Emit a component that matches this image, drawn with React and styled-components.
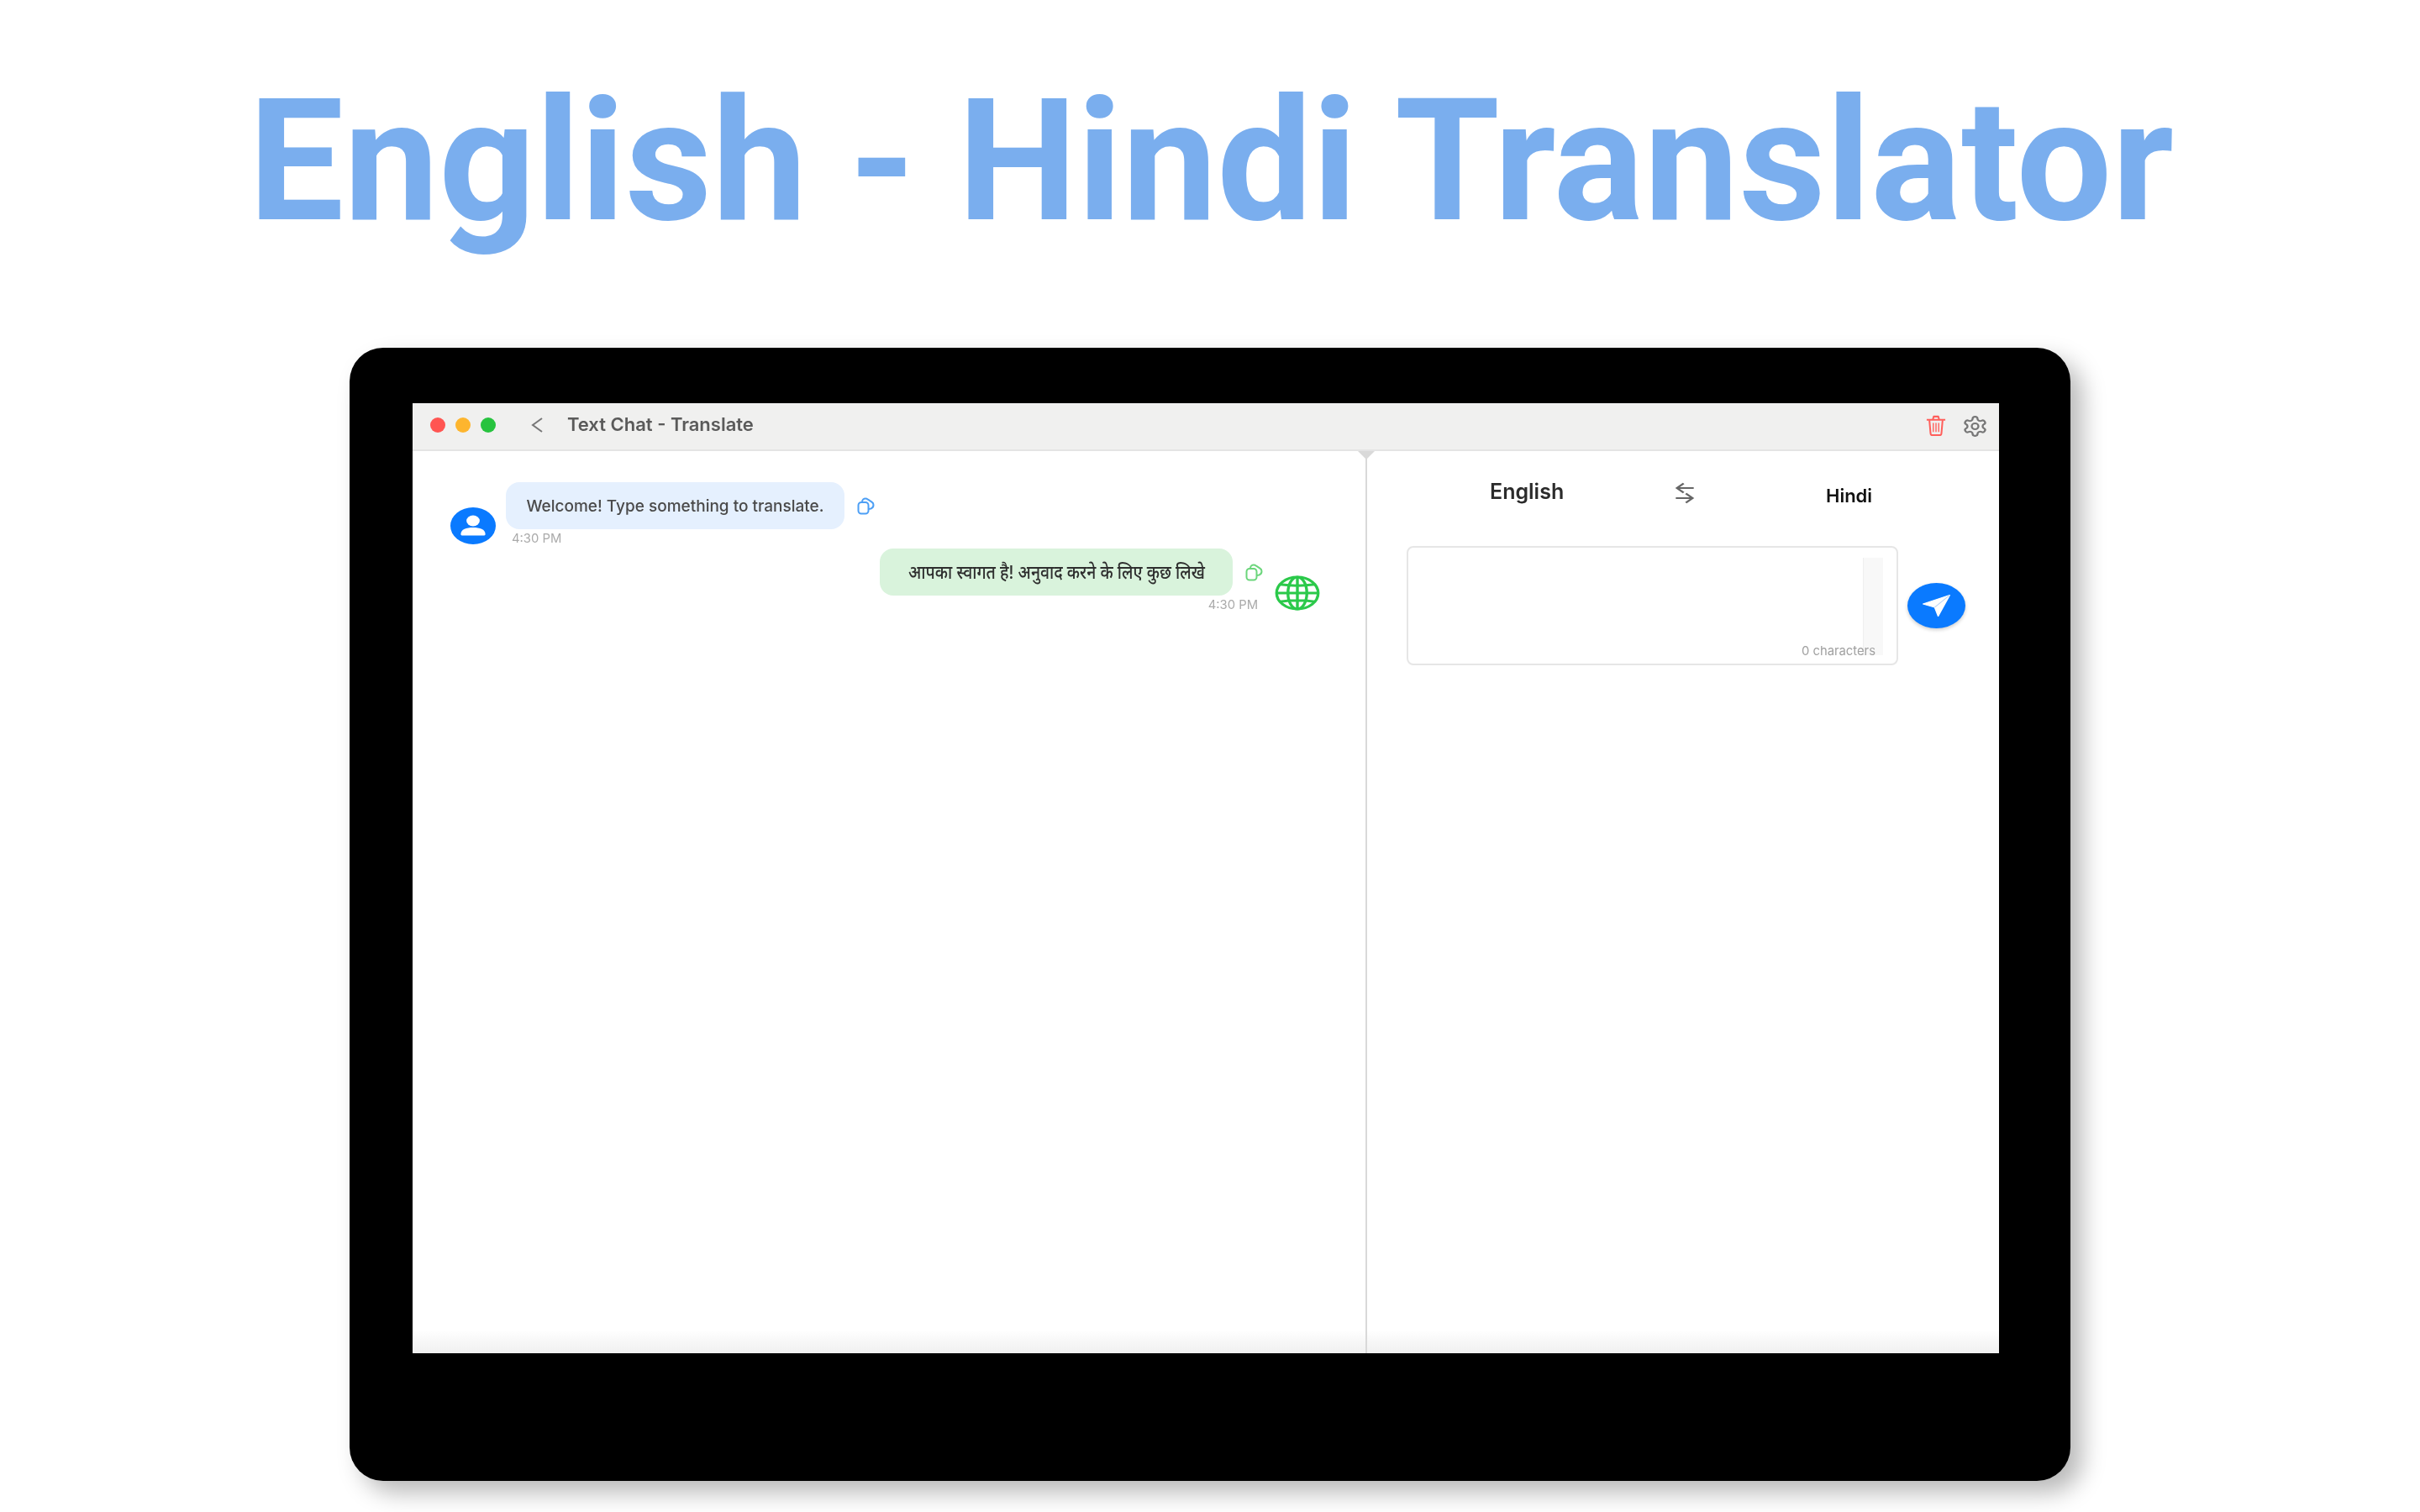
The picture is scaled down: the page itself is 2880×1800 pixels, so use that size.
import styled, { createGlobalStyle } from 'styled-components';

const GlobalStyle = createGlobalStyle`
	html, body {
		margin: 0;
		padding: 0;
		background: #fff;
		font-family: Inter, "Noto Sans", sans-serif;
	}
`;

const Page = styled.div`
	width: 2880px;
	height: 1800px;
	overflow: hidden;
	display: flex;
	flex-direction: column;
	align-items: center;
`;

const Headline = styled.h1`
	margin: 0 0 0 3px;
	height: 414px;
	padding-top: 67px;
	box-sizing: border-box;
	font-family: Roboto, sans-serif;
	font-size: 201.5px;
	font-weight: 700;
	line-height: 250px;
	color: #7aaeee;
	white-space: nowrap;
`;

const Device = styled.div`
	width: 2048px;
	height: 1349px;
	box-sizing: border-box;
	padding: 66px 85px 152px 75px;
	background: #000;
	border-radius: 40px;
	box-shadow: 14px 14px 28px rgba(0, 0, 0, 0.28);
`;

const Screen = styled.div`
	height: 100%;
	display: flex;
	flex-direction: column;
	background: linear-gradient(to bottom, #fff calc(100% - 28px), #f0f0f0);
	filter: blur(0.7px);
`;

const TitleBar = styled.div`
	height: 57px;
	flex: none;
	box-sizing: border-box;
	display: flex;
	align-items: center;
	padding: 0 14px 5px 21px;
	background: #f0f0ef;
	border-bottom: 2px solid #e4e4e4;
`;

const Light = styled.span`
	width: 18px;
	height: 18px;
	margin-right: 12px;
	margin-top: 2px;
	border-radius: 50%;
	background: ${(p) => p.$color};
`;

const BackIcon = styled.svg`
	width: 14px;
	height: 20px;
	margin: 2px 29px 0 30px;
`;

const WindowTitle = styled.div`
	flex: 1;
	font-size: 22px;
	font-weight: 600;
	color: #5a5a5a;
`;

const TrashIcon = styled.svg`
	width: 24px;
	height: 25px;
	margin: 2px 20px 0 0;
`;

const GearIcon = styled.svg`
	width: 29px;
	height: 25px;
	margin-top: 4px;
`;

const Body = styled.div`
	flex: 1;
	display: flex;
	min-height: 0;
`;

const ChatPane = styled.div`
	width: 1134px;
	flex: none;
	box-sizing: border-box;
	padding: 37px 54px 0 45px;
	display: flex;
	flex-direction: column;
	gap: 3px;
`;

const SidePane = styled.div`
	position: relative;
	flex: 1;
	border-left: 2px solid #d9d9d9;
`;

const Notch = styled.div`
	position: absolute;
	left: -11px;
	top: 0;
	width: 20px;
	height: 10px;
	background: #d9d9d9;
	clip-path: polygon(0 0, 100% 0, 50% 100%);
`;

const MessageRow = styled.div`
	display: flex;
	align-items: flex-end;
	justify-content: ${(p) => (p.$outgoing ? 'flex-end' : 'flex-start')};
	gap: ${(p) => (p.$outgoing ? '14px' : '12px')};
`;

const MessageColumn = styled.div`
	display: flex;
	flex-direction: column;
	align-items: ${(p) => (p.$outgoing ? 'flex-end' : 'flex-start')};
`;

const BubbleLine = styled.div`
	display: flex;
	align-items: center;
	gap: 15px;
`;

const Bubble = styled.div`
	height: 56px;
	box-sizing: border-box;
	display: flex;
	align-items: center;
	justify-content: center;
	width: ${(p) => p.$width}px;
	border-radius: 16px;
	background: ${(p) => (p.$outgoing ? '#d9f3dc' : '#e5f0fe')};
	color: #4a4a4a;
	font-size: 19px;
	font-weight: 500;
	white-space: nowrap;
`;

const HindiText = styled.span`
	display: inline-block;
	margin-bottom: 3px;
	transform: scaleX(0.88);
	font-size: 22px;
	font-weight: 500;
	color: #2e2e2e;
`;

const CopyIcon = styled.svg`
	width: 21px;
	height: 21px;
`;

const Time = styled.div`
	height: 18px;
	margin-top: 2px;
	padding: ${(p) => (p.$outgoing ? '0 6px 0 0' : '0 0 0 7px')};
	font-size: 14.8px;
	line-height: 18px;
	color: #aaa;
`;

const AvatarIcon = styled.svg`
	width: 54px;
	height: 44px;
	margin-bottom: 2px;
	flex: none;
`;

const GlobeIcon = styled.svg`
	width: 54px;
	height: 42px;
	margin-bottom: 2px;
	flex: none;
`;

const LanguageRow = styled.div`
	display: flex;
	padding: 34px 0 0 146px;
	height: 113px;
	box-sizing: border-box;
	align-items: flex-start;
`;

const Language = styled.div`
	width: ${(p) => p.$width}px;
	margin-top: ${(p) => p.$top}px;
	font-size: ${(p) => p.$size}px;
	line-height: 28px;
	font-weight: 600;
	color: ${(p) => p.$color};
	white-space: nowrap;
`;

const SwapIcon = styled.svg`
	width: 24px;
	height: 26px;
	margin: 3px 156px 0 131px;
`;

const InputRow = styled.div`
	display: flex;
	align-items: center;
	gap: 11px;
	padding-left: 47px;
`;

const InputBox = styled.div`
	position: relative;
	width: 585px;
	height: 142px;
	box-sizing: border-box;
	border: 2px solid #e6e6e6;
	border-radius: 8px;
`;

const ScrollTrack = styled.div`
	position: absolute;
	right: 16px;
	top: 12px;
	width: 23px;
	height: 116px;
	background: #f8f8f8;
	border-left: 1px solid #efefef;
`;

const CharCount = styled.div`
	position: absolute;
	right: 25px;
	bottom: 7px;
	font-size: 14.8px;
	line-height: 16px;
	color: #a0a0a0;
`;

const SendButton = styled.button`
	width: 69px;
	height: 54px;
	padding: 0;
	border: none;
	border-radius: 50%;
	background: #0a7aff;
	display: flex;
	align-items: center;
	justify-content: center;
	box-shadow: 0 2px 4px rgba(0, 0, 0, 0.2);
`;

const CopyGlyph = ({ color }) => (
	<CopyIcon viewBox="0 0 21 21" fill="none" stroke={color} strokeWidth="2" strokeLinejoin="round">
		<rect x="1.500" y="6" width="12" height="13.500" rx="3.500" />
		<path d="M6 6V5.500C6 3 8 1.500 10 1.500c1 0 2 .4 3 1.200l4.500 3c1.500 1 2 2 2 3.300 0 2-1 3.800-3 4.500l-3 .5" />
	</CopyIcon>
);

export default function App() {
	return (
		<Page>
			<GlobalStyle />
			<Headline>English - Hindi Translator</Headline>
			<Device>
				<Screen>
					<TitleBar>
						<Light $color="#ff5552" />
						<Light $color="#fdb52e" />
						<Light $color="#27c33f" />
						<BackIcon viewBox="0 0 14 20" fill="none" stroke="#777" strokeWidth="2">
							<path d="M13 2 2 10l11 8" />
						</BackIcon>
						<WindowTitle>Text Chat - Translate</WindowTitle>
						<TrashIcon viewBox="0 0 26 26" preserveAspectRatio="none" fill="none" stroke="#ff5f5b" strokeWidth="2.200" strokeLinejoin="round">
							<path d="M1 6h24M9 5.500 10 2h6l1 3.500" />
							<path d="M4.500 6.500 6 23a2 2 0 0 0 2 2h10a2 2 0 0 0 2-2l1.500-16.500" />
							<path d="M9.500 10v11M13 10v11M16.500 10v11" strokeWidth="1.500" />
						</TrashIcon>
						<GearIcon viewBox="1 1 22 22" fill="none" stroke="#777" strokeWidth="1.800" strokeLinejoin="round" preserveAspectRatio="none">
							<path d="M12.220 2h-.44a2 2 0 0 0-2 2v.180a2 2 0 0 1-1 1.730l-.43.250a2 2 0 0 1-2 0l-.150-.080a2 2 0 0 0-2.730.730l-.220.380a2 2 0 0 0 .730 2.730l.150.100a2 2 0 0 1 1 1.720v.510a2 2 0 0 1-1 1.740l-.150.090a2 2 0 0 0-.730 2.730l.220.380a2 2 0 0 0 2.730.730l.150-.080a2 2 0 0 1 2 0l.430.250a2 2 0 0 1 1 1.730V20a2 2 0 0 0 2 2h.440a2 2 0 0 0 2-2v-.180a2 2 0 0 1 1-1.730l.430-.250a2 2 0 0 1 2 0l.150.080a2 2 0 0 0 2.730-.730l.220-.390a2 2 0 0 0-.730-2.730l-.150-.080a2 2 0 0 1-1-1.740v-.500a2 2 0 0 1 1-1.740l.150-.090a2 2 0 0 0 .730-2.730l-.220-.380a2 2 0 0 0-2.730-.730l-.150.080a2 2 0 0 1-2 0l-.430-.250a2 2 0 0 1-1-1.730V4a2 2 0 0 0-2-2z" />
							<circle cx="12" cy="12" r="3" />
						</GearIcon>
					</TitleBar>
					<Body>
						<ChatPane>
							<MessageRow>
								<AvatarIcon viewBox="0 0 48 44" preserveAspectRatio="none">
									<ellipse cx="24" cy="22" rx="24" ry="22" fill="#0a7aff" />
									<ellipse cx="24" cy="16" rx="7" ry="6.500" fill="#fff" />
									<path d="M11 32c0-6 6-8 13-8s13 2 13 8c0 1-1 1.500-2 1.500H13c-1 0-2-.5-2-1.500z" fill="#fff" />
								</AvatarIcon>
								<MessageColumn>
									<BubbleLine>
										<Bubble $width={403}>Welcome! Type something to translate.</Bubble>
										<CopyGlyph color="#4d9ff5" />
									</BubbleLine>
									<Time>4:30 PM</Time>
								</MessageColumn>
							</MessageRow>
							<MessageRow $outgoing>
								<MessageColumn $outgoing>
									<BubbleLine>
										<Bubble $width={420} $outgoing>
											<HindiText>आपका स्वागत है! अनुवाद करने के लिए कुछ लिखे</HindiText>
										</Bubble>
										<CopyGlyph color="#6cd67c" />
									</BubbleLine>
									<Time $outgoing>4:30 PM</Time>
								</MessageColumn>
								<GlobeIcon viewBox="0 0 48 43" preserveAspectRatio="none" fill="none" stroke="#2bc94a" strokeWidth="3">
									<ellipse cx="24" cy="21.500" rx="22" ry="19.500" />
									<ellipse cx="24" cy="21.500" rx="10" ry="19.500" />
									<path d="M24 2v39M2 21.500h44M6 11Q24 14 42 11M6 32Q24 29 42 32" />
								</GlobeIcon>
							</MessageRow>
						</ChatPane>
						<SidePane>
							<Notch />
							<LanguageRow>
								<Language $width={89} $top={0} $size={25} $color="#2b2b2b">English</Language>
								<SwapIcon viewBox="0 0 18 26" preserveAspectRatio="none" fill="none" stroke="#666" strokeWidth="2">
									<path d="M17 7H2M8 1.500 2 7l6 5.500" />
									<path d="M1 19h15M10 13.500l6 5.500-6 5.500" />
								</SwapIcon>
								<Language $width={54} $top={5} $size={22} $color="#111">Hindi</Language>
							</LanguageRow>
							<InputRow>
								<InputBox>
									<ScrollTrack />
									<CharCount>0 characters</CharCount>
								</InputBox>
								<SendButton aria-label="Send">
									<svg width="33" height="26" viewBox="0 0 24 26" preserveAspectRatio="none">
										<path d="M23.500.5.500 11l10 4 3 10.500z" fill="#fff" stroke="#fff" strokeWidth="1" strokeLinejoin="round" />
										<path d="M23.500.5 10.500 15" stroke="#b9d3f5" strokeWidth="1" />
									</svg>
								</SendButton>
							</InputRow>
						</SidePane>
					</Body>
				</Screen>
			</Device>
		</Page>
	);
}
